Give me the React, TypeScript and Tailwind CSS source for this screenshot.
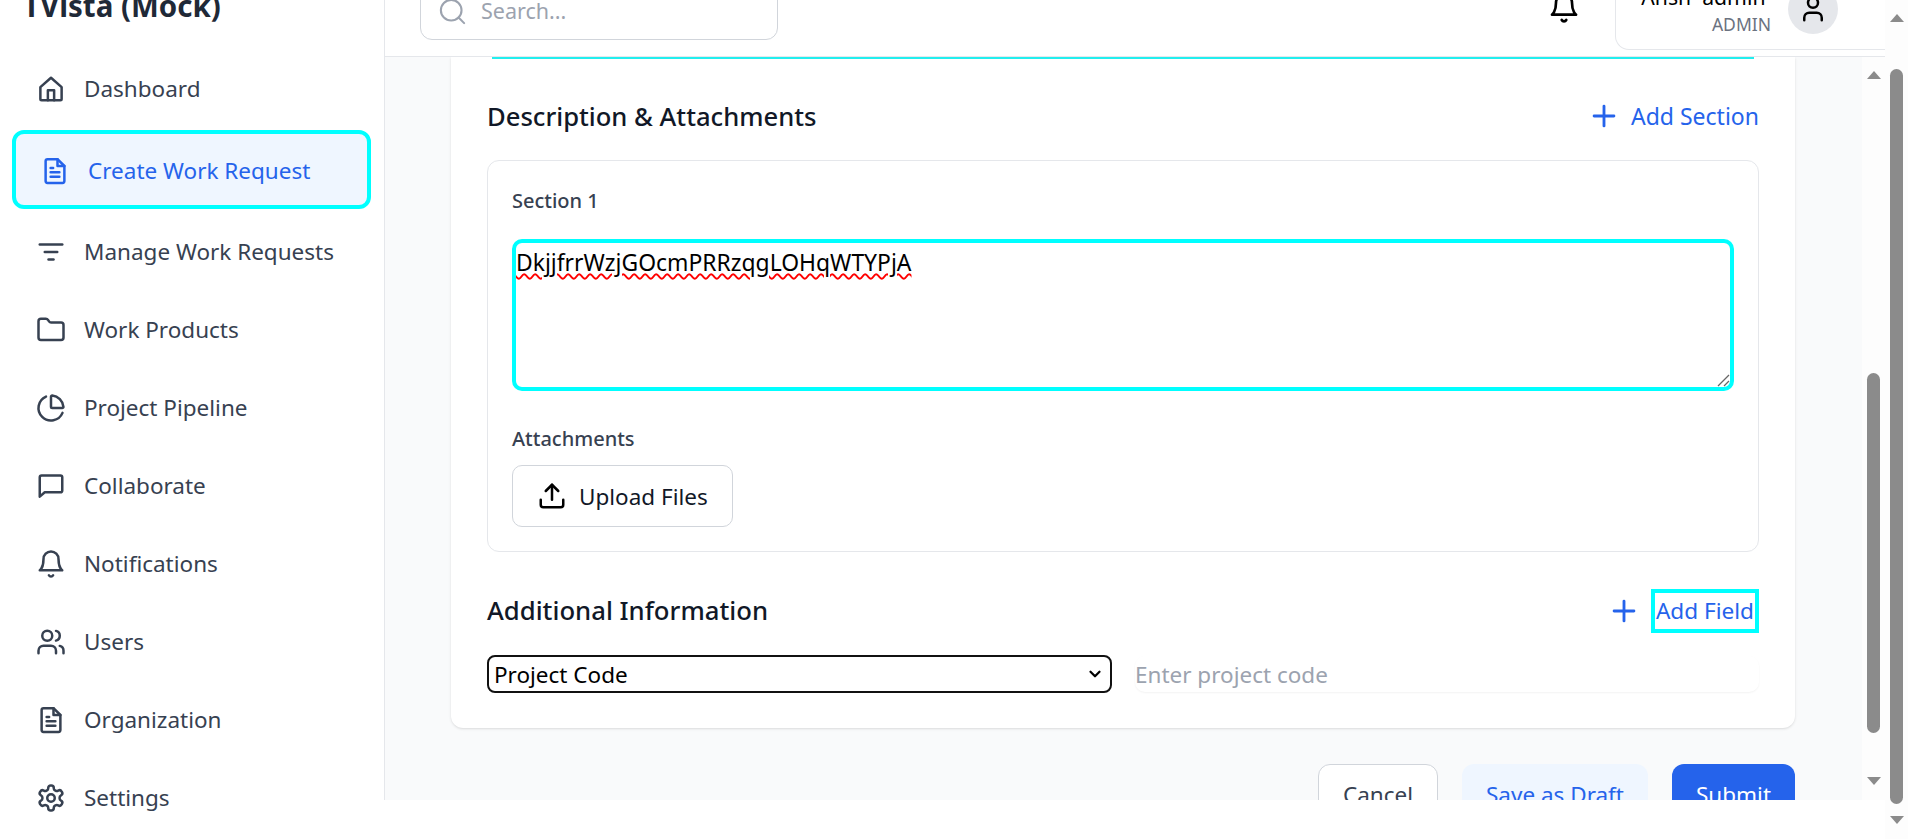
import { LuChartPie, LuFolder, LuListFilter, LuSettings, LuUsers, LuPlus, LuUpload, LuBell, LuSearch, LuUser } from 'react-icons/lu';
import { ChevronDown } from 'lucide-react';
import type { ReactNode } from 'react';

function HomeIcon({ className }: { className?: string }) {
  return (
    <svg className={className} fill="none" viewBox="0 0 24 24" stroke="currentColor" strokeWidth={2} strokeLinecap="round" strokeLinejoin="round">
      <path d="M3.5 10.5 12 3l8.5 7.5V20a1 1 0 0 1-1 1h-15a1 1 0 0 1-1-1z" />
      <path d="M9.5 21v-8h5v8" />
    </svg>
  );
}

function DocIcon({ className }: { className?: string }) {
  return (
    <svg className={className} fill="none" viewBox="0 0 24 24" stroke="currentColor" strokeWidth={2} strokeLinecap="round" strokeLinejoin="round">
      <path d="M14 2.5H6a1.5 1.5 0 0 0-1.5 1.5v16A1.5 1.5 0 0 0 6 21.5h12a1.5 1.5 0 0 0 1.5-1.5V8z" />
      <path d="M14 2.5V8h5.5" />
      <path d="M8.5 9.5h2M8.5 13h7M8.5 16.5h7" />
    </svg>
  );
}

function ChatIcon({ className }: { className?: string }) {
  return (
    <svg className={className} fill="none" viewBox="0 0 24 24" stroke="currentColor" strokeWidth={2} strokeLinecap="round" strokeLinejoin="round">
      <path d="M3 20.5V5a1.5 1.5 0 0 1 1.5-1.5h15A1.5 1.5 0 0 1 21 5v10.5a1.5 1.5 0 0 1-1.5 1.5H7z" />
    </svg>
  );
}

const navItems: { label: string; icon: ReactNode; active?: boolean }[] = [
  { label: 'Dashboard', icon: <HomeIcon className="w-[30px] h-[30px]" /> },
  { label: 'Create Work Request', icon: <DocIcon className="w-[30px] h-[30px]" />, active: true },
  { label: 'Manage Work Requests', icon: <LuListFilter className="w-[30px] h-[30px]" /> },
  { label: 'Work Products', icon: <LuFolder className="w-[30px] h-[30px]" /> },
  { label: 'Project Pipeline', icon: <LuChartPie className="w-[30px] h-[30px]" /> },
  { label: 'Collaborate', icon: <ChatIcon className="w-[30px] h-[30px]" /> },
  { label: 'Notifications', icon: <LuBell className="w-[30px] h-[30px]" /> },
  { label: 'Users', icon: <LuUsers className="w-[30px] h-[30px]" /> },
  { label: 'Organization', icon: <DocIcon className="w-[30px] h-[30px]" /> },
  { label: 'Settings', icon: <LuSettings className="w-[30px] h-[30px]" /> },
];

function ScrollArrow({ up }: { up?: boolean }) {
  return (
    <div
      className={`w-0 h-0 border-x-[7.5px] border-x-transparent ${
        up ? 'border-b-[8px] border-b-[#8b8b8b]' : 'border-t-[8px] border-t-[#8b8b8b]'
      }`}
    />
  );
}

function Sidebar() {
  return (
    <aside className="w-[385px] shrink-0 h-[800px] border-r border-[#e5e7eb] bg-white">
      <h1 className="pl-[23px] mt-[-13px] text-[29.5px] leading-[38px] font-bold text-[#1f2937]">TVista (Mock)</h1>
      <nav className="mt-[29px] flex flex-col gap-2">
        {navItems.map((item) =>
          item.active ? (
            <div
              key={item.label}
              className="ml-3 w-[359px] h-[79px] mt-[-2px] flex items-center gap-[18px] pl-6 pt-[2px] border-4 border-[#00ffff] rounded-[12px] bg-[#eff6ff] text-[#2563eb]"
            >
              {item.icon}
              <span className="text-[22.5px] leading-[30px]">{item.label}</span>
            </div>
          ) : (
            <div key={item.label} className="h-[70px] flex items-center gap-[18px] pl-9 text-[#374151]">
              {item.icon}
              <span className="text-[22.5px] leading-[30px]">{item.label}</span>
            </div>
          )
        )}
      </nav>
    </aside>
  );
}

function Header() {
  return (
    <header className="h-[57px] shrink-0 border-b border-[#e5e7eb] bg-white flex justify-between overflow-hidden">
      <div className="ml-[35px] mt-[-16px] w-[358px] h-[56px] flex items-center gap-[13px] pl-4 pb-[2px] border border-[#d1d5db] rounded-[12px]">
        <LuSearch className="w-[31px] h-[31px] text-[#9ca3af] stroke-[1.6]" />
        <span className="text-[21.5px] text-[#9ca3af]">Search...</span>
      </div>
      <div className="flex">
        <LuBell className="mt-[-8px] mr-[35px] w-[32px] h-[32px] text-black" />
        <div className="mt-[-20px] w-[270px] h-[70px] pl-6 flex items-start border-l border-b border-[#e5e7eb] rounded-bl-[14px]">
          <div className="w-[131px] text-right pt-[2px]">
            <div className="text-[21.2px] leading-[30px] text-black whitespace-pre">Ansh  admin </div>
            <div className="text-[17.5px] leading-[24px] text-[#6b7280]">ADMIN</div>
          </div>
          <div className="ml-[17px] mt-[4px] w-[50px] h-[50px] rounded-full bg-[#e5e7eb] flex items-center justify-center">
            <LuUser className="w-[30px] h-[30px] text-black" />
          </div>
        </div>
      </div>
    </header>
  );
}

function AddButton({ label, boxed }: { label: string; boxed?: boolean }) {
  return (
    <div className={boxed ? 'flex items-center gap-[10px] text-[#2563eb]' : 'flex items-center gap-[10px] mt-[-2px] text-[#2563eb]'}>
      <LuPlus className="w-[34px] h-[34px]" />
      <span className={boxed ? 'text-[22.6px] leading-[30px] border-4 border-[#00ffff] px-[1px] py-[3px]' : 'text-[23px] leading-[30px]'}>{label}</span>
    </div>
  );
}

function FormCard() {
  return (
    <div className="w-[1344px] h-[671px] ml-[66px] bg-white rounded-b-[12px] shadow-sm">
      <div className="mx-[41px] h-[2px] bg-[#22eeee]" />
      <div className="pl-9 pr-[36px]">
        <div className="mt-[26px] flex items-center justify-between">
          <h2 className="text-[25.6px] leading-[64px] font-medium text-[#111827]">Description &amp; Attachments</h2>
          <AddButton label="Add Section" />
        </div>
        <div className="mt-[11px] h-[392px] border border-[#e5e7eb] rounded-[12px] px-[24px] pt-[25px]">
          <div className="text-[20px] leading-[30px] font-medium text-[#374151]">Section 1</div>
          <div className="relative mt-[23px] h-[152px] border-4 border-[#00ffff] rounded-[10px] pt-[5px] text-[22.9px] leading-[30px] text-black">
            <span className="underline decoration-wavy decoration-[#ff0000] decoration-[1.5px] underline-offset-2">DkjjfrrWzjGOcmPRRzqgLOHqWTYPjA</span>
            <svg className="absolute right-0 bottom-0 w-[14px] h-[14px]" viewBox="0 0 14 14" stroke="#666" strokeWidth={1.3}>
              <path d="M2 13 13 2M8 13l5-5" />
            </svg>
          </div>
          <div className="mt-[33px] text-[20px] leading-[30px] font-medium text-[#374151]">Attachments</div>
          <div className="mt-[11px] w-[221px] h-[62px] flex items-center gap-[12px] pl-[24px] border border-[#d1d5db] rounded-[10px] text-[#111827]">
            <LuUpload className="w-[30px] h-[30px] text-black" />
            <span className="text-[22.5px] pt-[1px]">Upload Files</span>
          </div>
        </div>
        <div className="mt-[37px] flex items-center justify-between">
          <h2 className="text-[25.7px] leading-[44px] font-medium text-[#111827]">Additional Information</h2>
          <AddButton label="Add Field" boxed />
        </div>
        <div className="mt-[22px] flex gap-[23px]">
          <div className="w-[625px] h-[38px] flex items-center justify-between pl-[5px] pr-[6px] border-[2.5px] border-[#111111] rounded-[8px] text-[22.5px] text-black">
            <span className="pt-[1px]">Project Code</span>
            <ChevronDown className="w-[18px] h-[18px]" strokeWidth={3} />
          </div>
          <div className="flex-1 h-[36px] mt-px flex items-center pt-[2px] rounded-[10px] shadow-[0_1px_2px_rgba(0,0,0,0.05)] text-[22.5px] text-[#9ca3af]">
            Enter project code
          </div>
        </div>
      </div>
    </div>
  );
}

function Buttons() {
  return (
    <div className="w-[1344px] ml-[66px] mt-9 flex justify-end gap-6 text-[22.5px] leading-[30px]">
      <div className="w-[120px] h-[62px] flex items-center justify-center border border-[#d1d5db] rounded-[12px] bg-white text-[#374151]">Cancel</div>
      <div className="w-[186px] h-[62px] flex items-center justify-center rounded-[12px] bg-[#eff6ff] text-[#2563eb]">Save as Draft</div>
      <div className="w-[123px] h-[62px] flex items-center justify-center rounded-[12px] bg-[#2563eb] text-white">Submit</div>
    </div>
  );
}

export default function App() {
  return (
    <div className="w-[1908px] h-[839px] overflow-hidden flex bg-white font-['Noto_Sans',sans-serif]">
      <div className="w-[1885px] flex items-start">
        <Sidebar />
        <div className="flex-1 h-[800px] flex flex-col min-w-0">
          <Header />
          <div className="flex-1 min-h-0 flex overflow-hidden bg-[#f9fafb]">
            <main className="flex-1 min-w-0">
              <FormCard />
              <Buttons />
            </main>
            <div className="w-[23px] shrink-0 bg-[#fdfdfd] flex flex-col items-center">
              <div className="mt-[14px]"><ScrollArrow up /></div>
              <div className="mt-[294px] w-[13px] h-[360px] rounded-full bg-[#8b8b8b]" />
              <div className="mt-[44px]"><ScrollArrow /></div>
            </div>
          </div>
        </div>
      </div>
      <div className="w-[23px] shrink-0 bg-[#fdfdfd] flex flex-col items-center">
        <div className="mt-[14px]"><ScrollArrow up /></div>
        <div className="mt-[47px] w-[13px] h-[735px] rounded-full bg-[#8b8b8b]" />
        <div className="mt-[12px]"><ScrollArrow /></div>
      </div>
    </div>
  );
}
